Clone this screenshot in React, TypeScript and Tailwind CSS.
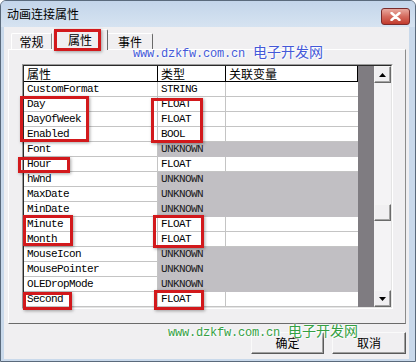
import React from "react";

const rows: [string, string, boolean][] = [
  ["CustomFormat", "STRING", false],
  ["Day", "FLOAT", false],
  ["DayOfWeek", "FLOAT", false],
  ["Enabled", "BOOL", false],
  ["Font", "UNKNOWN", true],
  ["Hour", "FLOAT", false],
  ["hWnd", "UNKNOWN", true],
  ["MaxDate", "UNKNOWN", true],
  ["MinDate", "UNKNOWN", true],
  ["Minute", "FLOAT", false],
  ["Month", "FLOAT", false],
  ["MouseIcon", "UNKNOWN", true],
  ["MousePointer", "UNKNOWN", true],
  ["OLEDropMode", "UNKNOWN", true],
  ["Second", "FLOAT", false],
];

const cjk = "font-['Noto_Sans_CJK_SC','Noto_Sans',sans-serif]";
const mono = "font-['Liberation_Mono','DejaVu_Sans_Mono',monospace]";

const redBoxes = [
  { l: 54, t: 29, w: 47, h: 22 },
  { l: 20, t: 96, w: 69, h: 46 },
  { l: 151, t: 98, w: 52, h: 45 },
  { l: 18, t: 157, w: 52, h: 16 },
  { l: 23, t: 215, w: 50, h: 31 },
  { l: 153, t: 215, w: 51, h: 33 },
  { l: 23, t: 292, w: 49, h: 18 },
  { l: 154, t: 290, w: 50, h: 20 },
];

function Arrow({ up }: { up: boolean }) {
  return (
    <svg width="7" height="4" viewBox="0 0 7 4">
      {up ? <polygon points="0,4 7,4 3.5,0" fill="#000" /> : <polygon points="0,0 7,0 3.5,4" fill="#000" />}
    </svg>
  );
}

export default function App() {
  return (
    <div className="relative w-[416px] h-[362px] overflow-hidden bg-[#c9d9eb] border border-[#5a6a7c] rounded-t-[6px] flex flex-col">
      {/* title bar */}
      <div className="h-[26px] flex items-center justify-between pl-[6px] pr-[5px] bg-gradient-to-b from-[#c3d5ea] to-[#d6e3f1]">
        <span className={`${cjk} text-[12px] text-black leading-none`}>动画连接属性</span>
        <div className="self-start mt-[7px] w-[29px] h-[17px] rounded-[3px] border border-[#7a2b2b] bg-gradient-to-b from-[#e8a9a0] via-[#d46a5e] to-[#c2392c] flex items-center justify-center">
          <svg width="11" height="9" viewBox="0 0 11 9">
            <path d="M1.5 1 L9.5 8 M9.5 1 L1.5 8" stroke="#fff" strokeWidth="2.4" strokeLinecap="round" />
          </svg>
        </div>
      </div>

      {/* client */}
      <div className="flex-1 ml-[3px] mr-[6px] mb-[2px] bg-[#f0eff1] flex flex-col">
        {/* tabs */}
        <div className={`${cjk} h-[22px] flex items-end pl-[7px] text-[12px] text-black`}>
          <div className="w-[41px] h-[16px] flex items-center justify-center border-t border-l border-white border-r border-r-[#8a8a8a] rounded-tl-[2px]">
            常规
          </div>
          <div className="relative w-[56px] h-[21px] -mb-[1px] flex items-center justify-center bg-[#f0eff1] border-t border-l border-white border-r border-r-[#696969] rounded-t-[2px]">
            属性
          </div>
          <div className="w-[45px] h-[16px] flex items-center justify-center border-t border-white border-r border-r-[#696969] rounded-tr-[2px]">
            事件
          </div>
        </div>

        {/* panel */}
        <div className="ml-[4px] mr-[3px] h-[275px] border-t border-l border-white border-r border-b border-r-[#8c8c8c] border-b-[#6a6a6a] pl-[13px] pt-[14px]">
          {/* grid frame */}
          <div className="w-[371px] h-[245px] border-t border-l border-[#9c9c9c] border-r border-b border-r-white border-b-white">
            <div className="w-[369px] h-[243px] border-t border-l border-[#2a2a2a] border-r border-b border-r-[#e4e4e4] border-b-[#e4e4e4] flex">
              {/* table */}
              <div className="w-[334px] flex flex-col bg-white">
                <div className={`${cjk} h-[16px] flex border-b border-black text-[12px] text-black leading-none`}>
                  <div className="w-[134px] border-r border-black pl-[3px] flex items-center">属性</div>
                  <div className="w-[68px] border-r border-black pl-[3px] flex items-center">类型</div>
                  <div className="w-[132px] border-r border-black pl-[3px] flex items-center">关联变量</div>
                </div>
                {rows.map(([name, type, gray]) => (
                  <div key={name} className={`${mono} h-[15px] flex text-[11px] tracking-[-0.6px] text-black leading-none`}>
                    <div className="w-[134px] border-r border-b border-[#c4c4c4] pl-[3px] flex items-center">{name}</div>
                    <div
                      className={
                        gray
                          ? "w-[68px] bg-[#c1bfc3] border-r border-b border-[#c1bfc3] pl-[3px] flex items-center text-[#1a1a1a]"
                          : "w-[68px] border-r border-b border-[#c4c4c4] pl-[3px] flex items-center"
                      }
                    >
                      {type}
                    </div>
                    <div
                      className={
                        gray
                          ? "w-[132px] bg-[#c1bfc3] border-b border-[#c1bfc3]"
                          : "w-[132px] border-b border-[#c4c4c4]"
                      }
                    />
                  </div>
                ))}
              </div>
              {/* empty grid background */}
              <div className="w-[16px] bg-[#7f7c81]" />
              {/* scrollbar */}
              <div className="w-[17px] flex flex-col bg-[#f4f3f5]">
                <div className="h-[17px] bg-[#f0eff1] border-t border-l border-[#f4f4f4] border-r border-b border-r-[#6a6a6a] border-b-[#6a6a6a] shadow-[inset_-1px_-1px_0_#a3a3a3] flex items-center justify-center">
                  <Arrow up />
                </div>
                <div className="flex-1 flex flex-col">
                  <div className="h-[121px]" />
                  <div className="h-[17px] bg-[#f0eff1] border-t border-l border-[#f4f4f4] border-r border-b border-r-[#6a6a6a] border-b-[#6a6a6a] shadow-[inset_-1px_-1px_0_#a3a3a3]" />
                </div>
                <div className="h-[17px] bg-[#f0eff1] border-t border-l border-[#f4f4f4] border-r border-b border-r-[#6a6a6a] border-b-[#6a6a6a] shadow-[inset_-1px_-1px_0_#a3a3a3] flex items-center justify-center">
                  <Arrow up={false} />
                </div>
              </div>
            </div>
          </div>
        </div>

        {/* buttons */}
        <div className={`${cjk} mt-[8px] pr-[3px] flex justify-end gap-[8px] text-[12px] text-black`}>
          <div className="w-[73px] h-[22px] flex items-center justify-center border-t border-l border-[#fafafa] border-r border-b border-r-[#5a5a5a] border-b-[#5a5a5a] shadow-[inset_-1px_-1px_0_#a0a0a0]">
            确定
          </div>
          <div className="w-[74px] h-[22px] flex items-center justify-center border-t border-l border-[#fafafa] border-r border-b border-r-[#5a5a5a] border-b-[#5a5a5a] shadow-[inset_-1px_-1px_0_#a0a0a0]">
            取消
          </div>
        </div>
      </div>

      {/* watermarks */}
      <div className="absolute z-20 left-[132px] top-[40px] flex items-baseline gap-[8px] text-[#4459d8] [text-shadow:0_0_2px_#fff,0_0_3px_#fff,1px_1px_2px_#fff]">
        <span className={`${mono} text-[12px] tracking-[-0.2px]`}>www.dzkfw.com.cn</span>
        <span className={`${cjk} text-[14px]`}>电子开发网</span>
      </div>
      <div className="absolute z-20 left-[167px] top-[319px] flex items-baseline gap-[8px] text-[#34a043] [text-shadow:0_0_2px_#fff,0_0_3px_#fff,1px_1px_2px_#fff]">
        <span className={`${mono} text-[12px] tracking-[-0.2px]`}>www.dzkfw.com.cn</span>
        <span className={`${cjk} text-[14px]`}>电子开发网</span>
      </div>

      {/* red highlight boxes */}
      {redBoxes.map((b, i) => (
        <div
          key={i}
          className="absolute z-30 border-[3px] border-[#d2191c] shadow-[1px_1px_3px_rgba(0,0,0,0.35)]"
          style={{ left: b.l - 1, top: b.t - 1, width: b.w, height: b.h }}
        />
      ))}
    </div>
  );
}
